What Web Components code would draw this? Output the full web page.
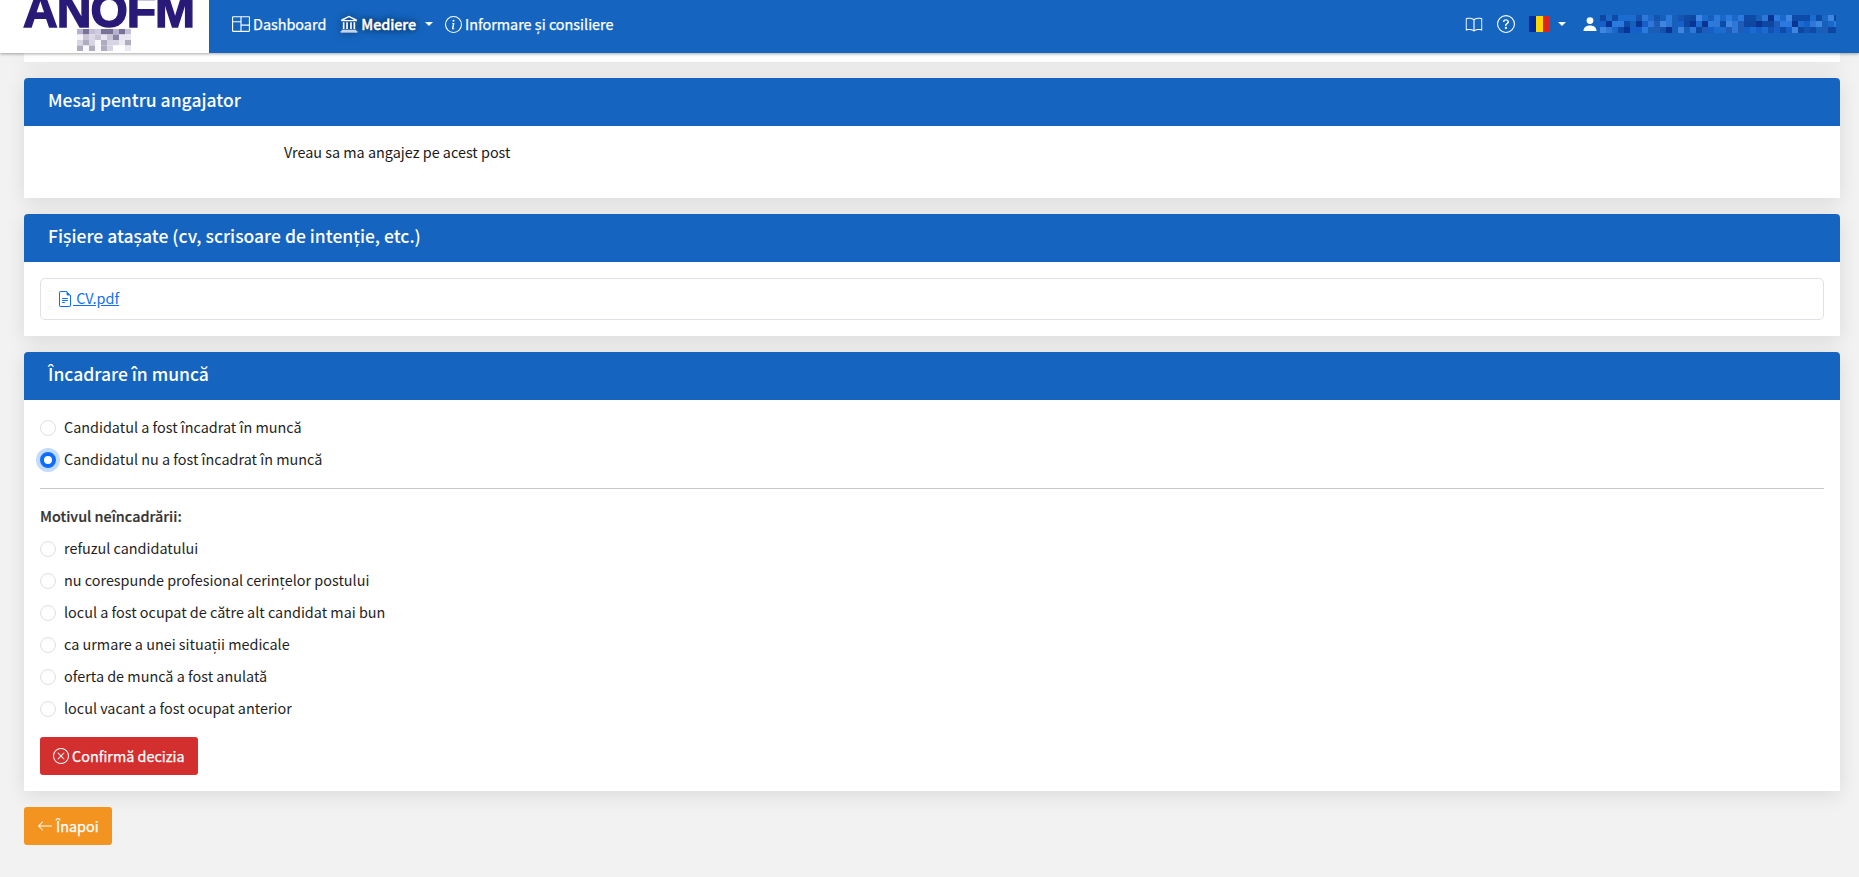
<!DOCTYPE html>
<html lang="ro"><head><meta charset="utf-8"><title>ANOFM</title>
<style>
html,body{margin:0;padding:0;height:877px;overflow:hidden;background:#f2f2f2;font-family:"Noto Sans CJK SC","Source Sans Pro","Noto Sans",sans-serif;font-size:14.4px;line-height:24px;color:#212529}
</style></head><body>
<app-shell>
<top-nav slot="nav"></top-nav>
<panel-card title-text="Mesaj pentru angajator"><message-row>Vreau sa ma angajez pe acest post</message-row></panel-card>
<panel-card title-text="Fişiere ataşate (cv, scrisoare de intenţie, etc.)"><file-box> CV.pdf</file-box></panel-card>
<panel-card title-text="Încadrare în muncă"><decision-form></decision-form></panel-card>
<action-button color="#f39420" icon="back">Înapoi</action-button>
</app-shell>
<script>
const ICONS={
 back:'<svg width="16" height="16" viewBox="0 0 16 16" fill="currentColor"><path fill-rule="evenodd" d="M15 8a.5.5 0 0 0-.5-.5H2.700l3.150-3.150a.5.5 0 1 0-.7-.7l-4 4a.5.5 0 0 0 0 .7l4 4a.5.5 0 0 0 .7-.7L2.700 8.500h11.800A.5.5 0 0 0 15 8z"/></svg>',
 x:'<svg width="16" height="16" viewBox="0 0 16 16" fill="currentColor"><path d="M8 15A7 7 0 1 1 8 1a7 7 0 0 1 0 14zm0 1A8 8 0 1 0 8 0a8 8 0 0 0 0 16z"/><path d="M4.650 4.650a.5.5 0 0 1 .7 0L8 7.300l2.650-2.650a.5.5 0 0 1 .7.7L8.700 8l2.650 2.650a.5.5 0 0 1-.7.7L8 8.700l-2.650 2.650a.5.5 0 0 1-.7-.7L7.300 8 4.650 5.350a.5.5 0 0 1 0-.7z"/></svg>'
};
function def(name,html,init){customElements.define(name,class extends HTMLElement{connectedCallback(){if(this.shadowRoot)return;const r=this.attachShadow({mode:'open'});r.innerHTML=typeof html==='function'?html(this):html;if(init)init(r,this)}})}
function rng(s){return()=>(s=(s*16807)%2147483647)/2147483647}

def('app-shell',`<style>:host{display:block}
.nav{position:relative;z-index:2}
main{display:flex;flex-direction:column;align-items:flex-start;padding:0 19px 0 24px}
.stub{align-self:stretch;height:9px;background:#fff;box-shadow:0 4px 20px rgba(0,0,0,.1);margin-bottom:16px}
::slotted(panel-card){margin-bottom:16px}
</style><div class="nav"><slot name="nav"></slot></div><main><div class="stub"></div><slot></slot></main>`);

def('top-nav',`<style>:host{display:flex;height:53px;background:#1565c0;box-shadow:0 1px 3px rgba(0,0,0,.35);color:#fff;font-size:14.4px;align-items:stretch}
.logo{width:209px;background:#fff;overflow:hidden;position:relative;flex:none}
.brand{position:absolute;left:23px;top:-13px;font:900 49px/46px "Liberation Sans",sans-serif;color:#2a1a78;letter-spacing:-1px;-webkit-text-stroke:1.5px #2a1a78;transform:scaleX(.98);transform-origin:0 0;white-space:nowrap}
.mosaic{position:absolute;left:77px;top:29px}
.menu{display:flex;align-items:center;padding-left:23px;flex:1;padding-bottom:5px}
.item{display:flex;align-items:center;gap:3px;margin-right:16px;white-space:nowrap;font-weight:400;-webkit-text-stroke:.25px #fff}
.item:first-child{margin-right:14px}
.item.active{margin-right:12px;font-weight:500;-webkit-text-stroke:.4px #fff;letter-spacing:-.1px;text-shadow:0 0 8px rgba(0,0,0,.75),0 0 4px rgba(0,0,0,.4)}
.item.active svg{filter:drop-shadow(0 0 4px rgba(0,0,0,.6))}
.caret{width:0;height:0;border:4.5px solid transparent;border-top-color:#fff;border-bottom:0;margin-left:6px}
.right{display:flex;align-items:center;padding-right:23px;padding-bottom:5px}
svg{display:block}
</style>
<div class="logo"><div class="brand">ANOFM</div><svg class="mosaic" width="54" height="22" id="lm"></svg></div>
<div class="menu">
<span class="item"><svg width="18" height="18" viewBox="0 0 16 16" fill="currentColor"><path d="M0 2a1 1 0 0 1 1-1h14a1 1 0 0 1 1 1v12a1 1 0 0 1-1 1H1a1 1 0 0 1-1-1V2zm1 0v3.500h6.500V2H1zm7.500 0v6.500H15V2H8.500zM15 9.500H8.500V14H15V9.500zM7.500 14V6.500H1V14h6.500z"/></svg>Dashboard</span>
<span class="item active"><svg width="18" height="18" viewBox="0 0 16 16" fill="currentColor"><path d="M8 .6 1 4v1.500h14V4L8 .6zM8 2l4.500 2.500h-9L8 2zM2.500 6.500h1.500v6H2.500zM5.500 6.500H7v6H5.500zM9 6.500h1.500v6H9zM12 6.500h1.500v6H12zM1.500 13h13v1h-13zM.5 14.500h15v1H.5z"/></svg>Mediere<i class="caret"></i></span>
<span class="item"><svg width="17" height="17" viewBox="0 0 16 16" fill="currentColor"><path d="M8 15A7 7 0 1 1 8 1a7 7 0 0 1 0 14zm0 1A8 8 0 1 0 8 0a8 8 0 0 0 0 16z"/><path d="m8.900 6.600-2.300.3-.1.400.5.1c.3.100.4.200.3.500l-.7 3.500c-.2.900.1 1.300.8 1.300.6 0 1.200-.3 1.500-.6l.1-.5c-.2.200-.5.300-.7.300-.3 0-.4-.2-.3-.5l.9-4.800zM9 4.500a1 1 0 1 1-2 0 1 1 0 0 1 2 0z"/></svg>Informare și consiliere</span>
</div>
<div class="right">
<svg style="margin-right:14px" width="18" height="18" viewBox="0 0 16 16" fill="currentColor"><path d="M1 2.800C2 2.400 3.400 2.300 4.700 2.400c1.200.1 2.400.5 3.300 1.100.9-.6 2.100-1 3.300-1.100 1.300-.1 2.700 0 3.700.4a.5.5 0 0 1 .3.500v10a.5.5 0 0 1-.7.500c-.9-.4-2.100-.5-3.200-.4-1.200.1-2.300.5-3 1.100a.5.5 0 0 1-.8 0c-.7-.6-1.800-1-3-1.100-1.100-.1-2.300 0-3.200.4a.5.5 0 0 1-.7-.5v-10a.5.5 0 0 1 .3-.5zM7.500 4.400C6.800 3.900 5.800 3.500 4.600 3.400 3.500 3.300 2.400 3.400 1.500 3.700v9c.9-.3 2-.3 3.100-.2 1 .1 2.100.4 2.900.9v-9zm1 9c.8-.5 1.900-.8 2.900-.9 1.100-.1 2.200-.1 3.100.2v-9c-.9-.3-2-.4-3.100-.3-1.200.1-2.200.5-2.900 1v9z"/></svg>
<svg style="margin-right:14px" width="18" height="18" viewBox="0 0 16 16" fill="currentColor"><path d="M8 15A7 7 0 1 1 8 1a7 7 0 0 1 0 14zm0 1A8 8 0 1 0 8 0a8 8 0 0 0 0 16z"/><path d="M5.250 6.030a.24.24 0 0 0 .24.250h.83c.14 0 .25-.110.270-.250.090-.660.540-1.140 1.340-1.140.690 0 1.320.340 1.320 1.170 0 .640-.380.930-.970 1.380-.680.490-1.210 1.060-1.170 1.990v.220c0 .140.110.250.250.250h.810c.140 0 .250-.110.250-.250v-.110c0-.720.270-.930 1.010-1.490.610-.460 1.240-.980 1.240-2.050C10.470 4.500 9.200 3.800 7.820 3.800c-1.460 0-2.500.8-2.570 2.230zM6.900 11.500c0 .5.400.9 1 .9s1-.4 1-.9-.4-.9-1-.9-1 .4-1 .9z"/></svg>
<svg width="21" height="16"><rect width="7" height="16" fill="#002b9f"/><rect x="7" width="7" height="16" fill="#fcd600"/><rect x="14" width="7" height="16" fill="#e2231a"/></svg>
<i class="caret" style="margin:0 17px 0 8px"></i>
<svg style="margin-right:3px" width="14" height="14" viewBox="0 0 14 14" fill="currentColor"><circle cx="7" cy="3.600" r="3.400"/><path d="M.5 14c0-3.500 2.500-5.600 6.500-5.600s6.500 2.100 6.500 5.600z"/></svg>
<svg width="236" height="19" id="um"></svg>
</div>`,(r)=>{
 const R=rng(12345);
 let u='',cols=['#1a6cd0','#0d47a1','#2a7ae0','#1560b8','#3f86e0','#1e5cb8','#0a3494','#2f78d8','#1560c8','#1454b0','#1a68c8','#0e4aa8'];
 for(let y=0;y<18;y+=6)for(let x=0;x<236;x+=6)u+=`<rect x="${x}" y="${y}" width="6" height="6" fill="${cols[Math.floor(R()*cols.length)]}"/>`;
 r.getElementById('um').innerHTML=u;
 let l='',gc=[['#c4bfd8','#b8b0d0','#d0cce0','#7a7298','#c0bad4'],['#f4f3f8','#e8e6f0','#8a85a4','#dcd9e6','#c9c5d6'],['#fff','#ece9f2','#f8f8fa','#b0acc0','#d8d5e2']];
 for(let y=0;y<4;y++)for(let x=0;x<9;x++){const g=gc[Math.min(y,2)];l+=`<rect x="${x*6}" y="${y*5.5}" width="6" height="5.5" fill="${g[Math.floor(R()*g.length)]}"/>`}
 r.getElementById('lm').innerHTML=l;
});

def('panel-card',h=>`<style>:host{display:block;align-self:stretch;background:#fff;box-shadow:0 4px 20px rgba(0,0,0,.1);border-radius:4px 4px 0 0}
header{background:#1565c0;color:#fff;height:48px;box-sizing:border-box;padding:0 24px 4px;display:flex;align-items:center;font-size:17.5px;border-radius:4px 4px 0 0;font-weight:500}
.b{padding:16px}
</style><header>${h.getAttribute('title-text')}</header><div class="b"><slot></slot></div>`);

def('message-row',`<style>:host{display:block;height:40px;padding-left:244px;line-height:24px;margin-top:-2px;padding-bottom:2px;color:#1a1a1a}</style><slot></slot>`);

def('file-box',`<style>:host{display:flex;align-items:center;height:42px;box-sizing:border-box;border:1px solid #dee2e6;border-radius:5px;padding:0 16px 2px 16px}
a{color:#0d6efd;text-decoration:underline;white-space:pre}
svg{display:inline-block;vertical-align:-3px}
</style><a href="#"><svg width="16" height="16" viewBox="0 0 16 16" fill="currentColor"><path d="M5.500 7a.5.5 0 0 0 0 1h5a.5.5 0 0 0 0-1h-5zM5 9.500a.5.5 0 0 1 .5-.5h5a.5.5 0 0 1 0 1h-5a.5.5 0 0 1-.5-.5zm0 2a.5.5 0 0 1 .5-.5h2a.5.5 0 0 1 0 1h-2a.5.5 0 0 1-.5-.5z"/><path d="M9.500 0H4a2 2 0 0 0-2 2v12a2 2 0 0 0 2 2h8a2 2 0 0 0 2-2V4.500L9.500 0zm0 1v2A1.500 1.500 0 0 0 11 4.500h2V14a1 1 0 0 1-1 1H4a1 1 0 0 1-1-1V2a1 1 0 0 1 1-1h5.500z"/></svg><slot></slot></a>`);

def('radio-row',h=>`<style>:host{display:flex;align-items:center;height:32px;color:#1f1f1f}
i{box-sizing:border-box;width:16px;height:16px;border-radius:50%;border:1px solid #dfdfdf;background:#fff;margin-right:8px;flex:none}
span{margin-top:-2px}
:host([checked]) i{background:#fff;border:4.5px solid #0d6efd;box-shadow:0 0 0 4px #c2dbfe}
</style><i></i><span><slot></slot></span>`);

def('decision-form',`<style>:host{display:block;margin-top:-4px}
hr{border:0;border-top:1px solid #c8c8c8;margin:12px 0 16px}
.l{font-weight:500;-webkit-text-stroke:.2px #333;line-height:24px;margin-bottom:4px;color:#333;margin-top:-1px;padding-bottom:1px}
.btn{margin-top:12px;display:block}
</style>
<radio-row>Candidatul a fost încadrat în muncă</radio-row>
<radio-row checked>Candidatul nu a fost încadrat în muncă</radio-row>
<hr>
<div class="l">Motivul neîncadrării:</div>
<radio-row>refuzul candidatului</radio-row>
<radio-row>nu corespunde profesional cerințelor postului</radio-row>
<radio-row>locul a fost ocupat de către alt candidat mai bun</radio-row>
<radio-row>ca urmare a unei situații medicale</radio-row>
<radio-row>oferta de muncă a fost anulată</radio-row>
<radio-row>locul vacant a fost ocupat anterior</radio-row>
<action-button class="btn" color="#d32f2f" icon="x">Confirmă decizia</action-button>`);

def('action-button',h=>`<style>:host{display:inline-block}
button{display:inline-flex;align-items:center;gap:3px;height:38px;padding:0 13px;border:0;border-radius:3px;background:${h.getAttribute('color')};color:#fff;font:400 14.4px "Noto Sans CJK SC",sans-serif;-webkit-text-stroke:.25px #fff}
svg{display:block}
span{margin-top:-2px}
</style><button>${ICONS[h.getAttribute('icon')]}<span><slot></slot></span></button>`);
</script>
</body></html>
